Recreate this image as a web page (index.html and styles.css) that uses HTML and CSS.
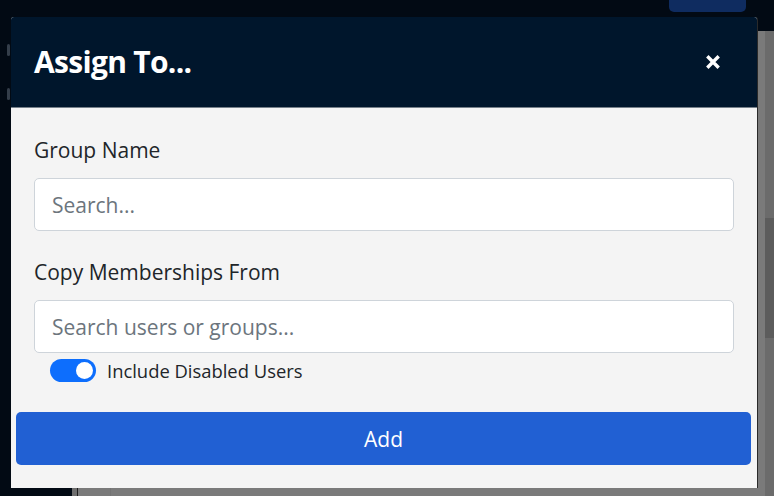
FILE: index.html
```html
<!DOCTYPE html>
<html lang="en">
<head>
<meta charset="utf-8">
<title>Assign To...</title>
<link rel="stylesheet" href="styles.css">
</head>
<body>
<div class="page">
  <div class="topbar">
    <div class="topbar-btn"></div>
  </div>
  <div class="main">
    <div class="sidebar">
      <span class="side-mark m1"></span>
      <span class="side-mark m2"></span>
    </div>
    <div class="sidegap"></div>
    <div class="content">
      <div class="content-col"></div>
    </div>
    <div class="scrollbar"><div class="thumb"></div></div>
  </div>
</div>

<div class="modal" role="dialog" aria-labelledby="mt">
  <div class="modal-header">
    <h5 class="modal-title" id="mt">Assign To...</h5>
    <button class="close" aria-label="Close">
      <svg width="16" height="16" viewBox="0 0 16 16"><path d="M2.3 2.3 L13.7 13.7 M13.7 2.3 L2.3 13.7" stroke="#fff" stroke-width="3.4" stroke-linecap="butt"/></svg>
    </button>
  </div>
  <div class="modal-body">
    <label class="form-label">Group Name</label>
    <input class="form-control" type="text" placeholder="Search...">
    <label class="form-label second">Copy Memberships From</label>
    <input class="form-control" type="text" placeholder="Search users or groups...">
    <div class="form-switch">
      <span class="switch"><span class="knob"></span></span>
      <span class="switch-label">Include Disabled Users</span>
    </div>
  </div>
  <div class="modal-footer">
    <button class="btn-add">Add</button>
  </div>
</div>
</body>
</html>
```
FILE: styles.css
```css
html, body {
  margin: 0;
  padding: 0;
  height: 100%;
}
body {
  background: #020a14;
  font-family: "Open Sans", "Noto Sans", sans-serif;
  overflow: hidden;
}
.page {
  display: flex;
  flex-direction: column;
  height: 496px;
}
.topbar {
  height: 31px;
  background: #020a14;
  display: flex;
  justify-content: flex-end;
  padding-right: 28px;
}
.topbar-btn {
  width: 77px;
  height: 12px;
  background: #0f2c60;
  border-radius: 0 0 5px 5px;
}
.main {
  flex: 1;
  display: flex;
}
.sidebar {
  width: 72px;
  background: #020a14;
  position: relative;
}
.side-mark {
  position: absolute;
  left: 7px;
  width: 3px;
  height: 12px;
  background: #343e4a;
  border-radius: 2px;
}
.m1 { top: 13px; }
.m2 { top: 57px; }
.sidegap {
  width: 5px;
  background: #6e6e6e;
  border-right: 1px solid #1e1e1e;
}
.content {
  flex: 1;
  background: #7a7a7a;
  display: flex;
}
.content-col {
  width: 32px;
  border-right: 1px solid #737373;
}
.scrollbar {
  width: 9px;
  background: #6b6b6b;
  padding-top: 187px;
}
.thumb {
  height: 120px;
  background: #5c5c5c;
}

.modal {
  position: absolute;
  left: 11px;
  top: 17px;
  width: 746px;
  height: 471px;
  background: #f4f4f4;
  border-radius: 3px 3px 0 0;
  display: flex;
  flex-direction: column;
  box-shadow: 1px 0 0 #2a2a2a;
}
.modal-header {
  height: 91px;
  box-sizing: border-box;
  background: #00162c;
  border-bottom: 1px solid #76808a;
  border-radius: 3px 3px 0 0;
  display: flex;
  align-items: center;
  justify-content: space-between;
  padding: 0 36px 0 23px;
}
.modal-title {
  margin: 0;
  color: #fff;
  font-family: "Open Sans", sans-serif;
  font-weight: 700;
  font-size: 30px;
  letter-spacing: -0.7px;
  line-height: 1;
}
.close {
  background: none;
  border: 0;
  padding: 0;
  width: 16px;
  height: 16px;
  display: flex;
}
.modal-body {
  padding: 27px 23px 0 23px;
  display: flex;
  flex-direction: column;
}
.form-label {
  color: #212529;
  font-size: 21px;
  line-height: 30px;
  margin-bottom: 13px;
}
.form-label.second {
  margin-top: 26px;
}
.form-control {
  box-sizing: border-box;
  height: 53px;
  width: 700px;
  border: 1px solid #ced4da;
  border-radius: 5px;
  background: #fff;
  padding: 0 17px;
  font-family: "Open Sans", sans-serif;
  font-size: 21px;
  color: #212529;
  outline: none;
}
.form-control::placeholder {
  color: #6c757d;
}
.form-switch {
  display: flex;
  align-items: center;
  gap: 11px;
  margin-top: 6px;
  padding-left: 16px;
  height: 23px;
}
.switch {
  width: 46px;
  height: 23px;
  border-radius: 12px;
  background: #0d6efd;
  display: flex;
  align-items: center;
  justify-content: flex-end;
  padding-right: 3px;
  box-sizing: border-box;
}
.knob {
  width: 17px;
  height: 17px;
  border-radius: 50%;
  background: #fff;
}
.switch-label {
  color: #212529;
  font-size: 18.4px;
  line-height: 23px;
}
.modal-footer {
  padding: 30px 6px 0 5px;
}
.btn-add {
  width: 100%;
  height: 53px;
  border: 0;
  border-radius: 5px;
  background: #2160d3;
  color: #fff;
  font-family: "Open Sans", sans-serif;
  font-size: 21px;
  cursor: pointer;
}
```
